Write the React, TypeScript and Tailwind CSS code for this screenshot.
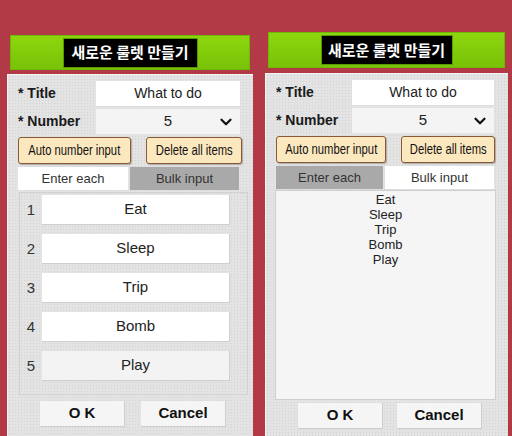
import { ChevronDown } from "lucide-react";

const ITEMS = ["Eat", "Sleep", "Trip", "Bomb", "Play"];

const dotted =
  "bg-[#e3e3e3] bg-[radial-gradient(circle,#d3d3d3_0.8px,transparent_1px)] bg-[length:3px_3px]";

type PanelProps = {
  bulk?: boolean;
};

function Header({ bulk }: PanelProps) {
  return (
    <div
      className={`mx-[3px] flex items-center justify-center border border-[#6fb800] bg-gradient-to-b from-[#8dd60e] to-[#78c208] ${
        bulk ? "mt-[32px] h-[36px]" : "mt-[35px] h-[35px]"
      }`}
    >
      <div
        className={`flex h-[30px] items-center justify-center border border-[#5a9a00] bg-black text-[15px] font-bold text-white ${
          bulk ? "w-[132px]" : "w-[135px]"
        }`}
        style={{ fontFamily: '"Noto Sans CJK KR", "Noto Sans", sans-serif' }}
      >
        새로운 룰렛 만들기
      </div>
    </div>
  );
}

function Panel({ bulk }: PanelProps) {
  return (
    <div className={`flex h-[436px] flex-col ${bulk ? "ml-[12px] w-[243px]" : "ml-[7px] w-[246px]"}`}>
      <Header bulk={bulk} />

      {/* Body */}
      <div
        className={`flex flex-1 flex-col border-l border-t border-[#f4f4f4] ${dotted} ${
          bulk ? "mt-[5px]" : "mt-[4px]"
        }`}
      >
        {/* Title */}
        <div className="mt-[6px] flex h-[25px] items-center">
          <div className={`pl-[10px] text-[14px] font-bold text-[#1a1a1a] ${bulk ? "w-[86px]" : "w-[88px]"}`}>
            * Title
          </div>
          <div
            className={`flex h-full items-center justify-center bg-white text-[14px] text-[#222] ${
              bulk ? "w-[142px]" : "w-[144px]"
            }`}
          >
            What to do
          </div>
        </div>

        {/* Number */}
        <div className="mt-[3px] flex h-[25px] items-center">
          <div className={`pl-[10px] text-[14px] font-bold text-[#1a1a1a] ${bulk ? "w-[86px]" : "w-[88px]"}`}>
            * Number
          </div>
          <div
            className={`relative flex h-full items-center justify-center bg-[#f4f4f4] text-[15px] text-[#222] ${
              bulk ? "w-[142px]" : "w-[144px]"
            }`}
          >
            5
            <ChevronDown className="absolute right-[5px] top-[4px] text-[#111]" size={18} strokeWidth={3} />
          </div>
        </div>

        {/* Buttons */}
        <div className="mt-[3px] flex h-[27px] pl-[10px]">
          <button
            className={`flex h-full items-center justify-center whitespace-nowrap rounded-[3px] border border-[#8a5a36] bg-[#fce8bf] text-[15px] text-[#111] shadow-[1px_1px_1px_rgba(0,0,0,0.25)] ${
              bulk ? "w-[110px]" : "w-[113px]"
            }`}
          >
            <span className="inline-block scale-x-[0.75]">Auto number input</span>
          </button>
          <button
            className={`flex h-full items-center justify-center whitespace-nowrap rounded-[3px] border border-[#8a5a36] bg-[#fce8bf] text-[15px] text-[#111] shadow-[1px_1px_1px_rgba(0,0,0,0.25)] ${
              bulk ? "ml-[15px] w-[94px]" : "ml-[15px] w-[96px]"
            }`}
          >
            <span className="inline-block scale-x-[0.75]">Delete all items</span>
          </button>
        </div>

        {/* Tabs */}
        <div className="mt-[3px] flex h-[23px] gap-[2px] pl-[10px]">
          <div
            className={`flex h-full items-center justify-center text-[13px] text-[#333] ${
              bulk ? "w-[107px] bg-[#a9a9a9]" : "w-[110px] bg-white"
            }`}
          >
            Enter each
          </div>
          <div
            className={`flex h-full items-center justify-center text-[13px] text-[#333] ${
              bulk ? "w-[109px] bg-white" : "w-[109px] bg-[#a9a9a9]"
            }`}
          >
            Bulk input
          </div>
        </div>

        {bulk ? (
          <div className="ml-[9px] mt-[1px] h-[210px] w-[221px] border border-[#cfcfcf] bg-[#f5f5f5] pt-[1px] text-center text-[13px] leading-[15px] text-[#222]">
            {ITEMS.map((item) => (
              <div key={item}>{item}</div>
            ))}
          </div>
        ) : (
          <div className="ml-[11px] mt-[2px] flex h-[203px] w-[229px] flex-col gap-[9px] border border-[#d2d2d2] pt-[2px]">
            {ITEMS.map((item, i) => (
              <div key={item} className="flex h-[30px] items-center">
                <div className="w-[22px] text-center text-[15px] text-[#333]">{i + 1}</div>
                <div
                  className={`flex h-full w-[188px] items-center justify-center border-b border-r border-[#cfcfcf] text-[15px] text-[#222] ${
                    i === 4 ? "bg-[#f3f3f3]" : "bg-white"
                  }`}
                >
                  {item}
                </div>
              </div>
            ))}
          </div>
        )}

        {/* OK / Cancel */}
        <div className={`flex h-[26px] pl-[32px] ${bulk ? "mt-[3px] gap-[14px]" : "mt-[6px] gap-[16px]"}`}>
          <button className="h-full w-[85px] border-b border-r border-[#cdcdcd] bg-[#f5f5f5] text-[15px] font-bold text-[#111]">
            O K
          </button>
          <button className="h-full w-[85px] border-b border-r border-[#cdcdcd] bg-[#f5f5f5] text-[15px] font-bold text-[#111]">
            Cancel
          </button>
        </div>
      </div>
    </div>
  );
}

export default function App() {
  return (
    <div
      className="flex h-[436px] w-[512px] overflow-hidden bg-[#b23a47]"
      style={{ fontFamily: '"Liberation Sans", Arial, sans-serif' }}
    >
      <Panel />
      <Panel bulk />
    </div>
  );
}
